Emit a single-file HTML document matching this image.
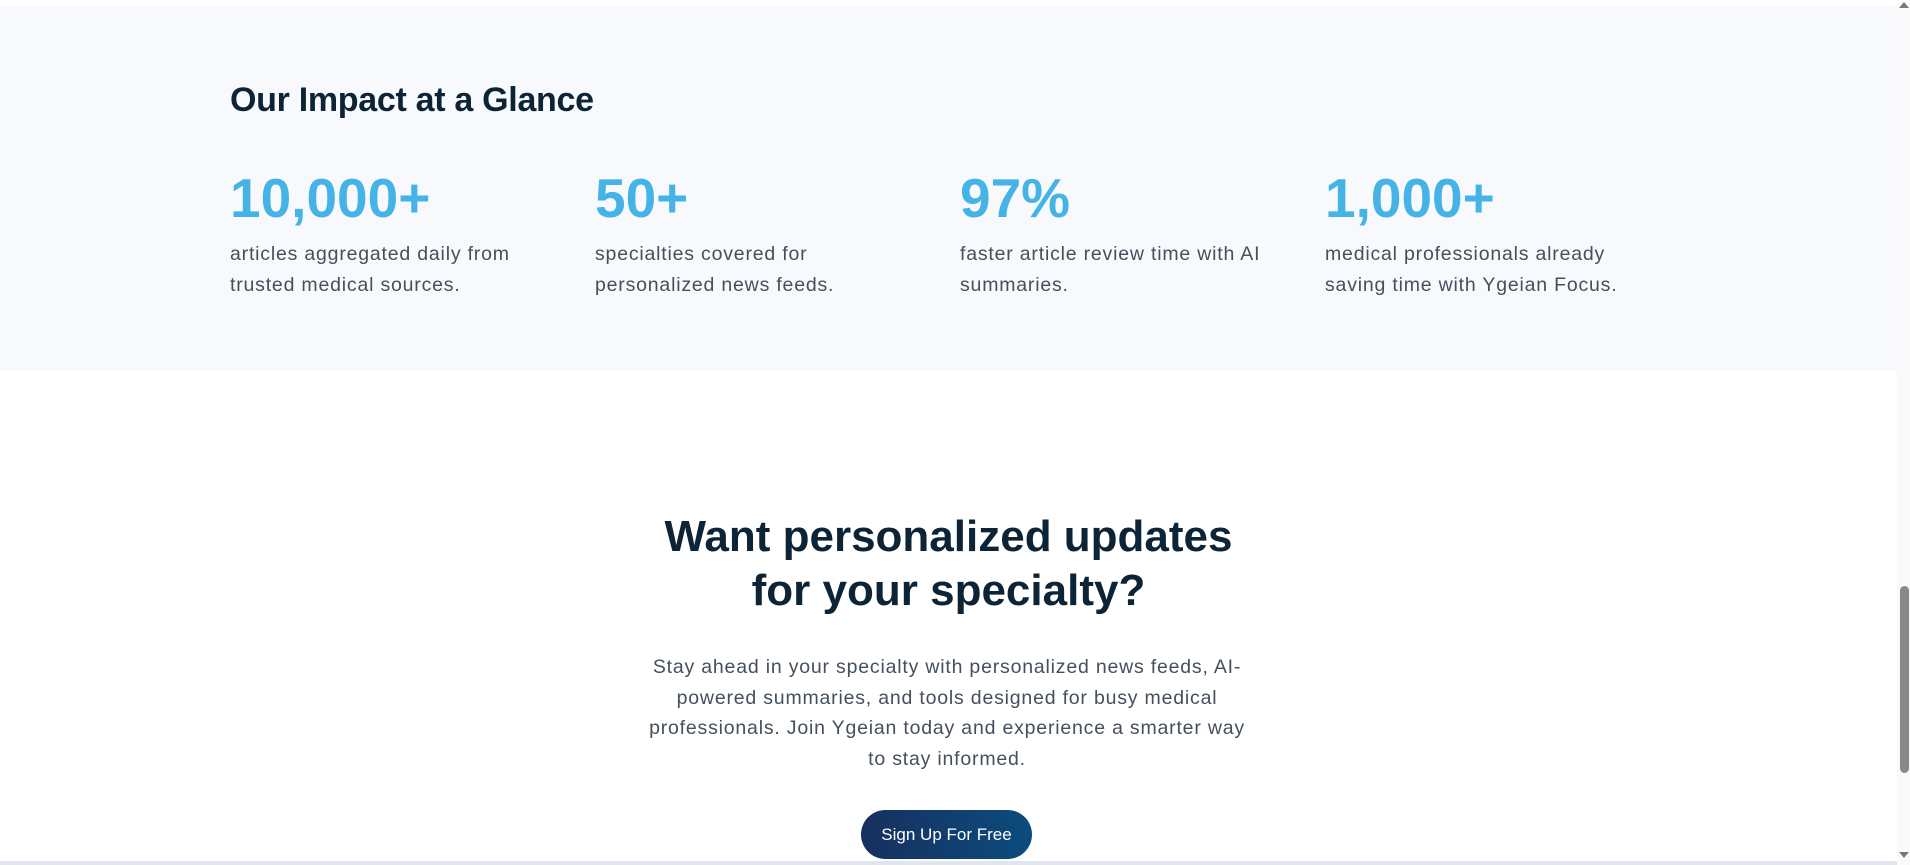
<!DOCTYPE html>
<html><head><meta charset="utf-8"><style>
*{margin:0;padding:0;box-sizing:border-box}
body{width:1910px;height:865px;overflow:hidden;background:#fff;font-family:"Liberation Sans",sans-serif;position:relative}
.gray{position:absolute;left:0;top:6px;width:1897px;height:365px;background:#f7f9fc}
h2{position:absolute;left:230px;top:81px;font-size:34px;font-weight:bold;color:#0c2435;letter-spacing:-0.3px}
.stat{position:absolute;top:166px;width:360px}
.num{font-size:55px;font-weight:bold;color:#45b3e6;line-height:64px;letter-spacing:0px}
.txt{margin-top:9px;font-size:19.5px;line-height:31px;color:#45505c;letter-spacing:0.8px}
.cta{position:absolute;left:0;width:1897px;text-align:center}
.cta h3{position:absolute;top:510px;width:100%;font-size:44px;font-weight:bold;line-height:54px;color:#0c2435;letter-spacing:0px}
.cta p{position:absolute;top:652px;left:560px;width:774px;font-size:19.5px;line-height:30.5px;color:#45505c;letter-spacing:0.8px}
.btn{position:absolute;left:861px;top:810px;width:171px;height:49px;border-radius:25px;background:linear-gradient(90deg,#17305f,#0b4c7d);color:#fff;font-size:17px;line-height:49px;text-align:center}
.sb{position:absolute;left:1897px;top:0;width:13px;height:865px;background:#fafafa}
.thumb{position:absolute;left:1900px;top:586px;width:9px;height:187px;border-radius:5px;background:#898989}
.bot{position:absolute;left:0;top:861px;width:1897px;height:4px;background:#dfe6f2}
</style></head><body>
<div class="gray"></div>
<h2>Our Impact at a Glance</h2>
<div class="stat" style="left:230px"><div class="num">10,000+</div><div class="txt">articles aggregated daily from<br>trusted medical sources.</div></div>
<div class="stat" style="left:595px"><div class="num">50+</div><div class="txt">specialties covered for<br>personalized news feeds.</div></div>
<div class="stat" style="left:960px"><div class="num">97%</div><div class="txt">faster article review time with AI<br>summaries.</div></div>
<div class="stat" style="left:1325px"><div class="num">1,000+</div><div class="txt">medical professionals already<br>saving time with Ygeian Focus.</div></div>
<div class="cta">
<h3>Want personalized updates<br>for your specialty?</h3>
<p>Stay ahead in your specialty with personalized news feeds, AI-<br>powered summaries, and tools designed for busy medical<br>professionals. Join Ygeian today and experience a smarter way<br>to stay informed.</p>
</div>
<div class="btn">Sign Up For Free</div>
<div class="bot"></div>
<div class="sb"></div>
<div class="thumb"></div>
<div style="position:absolute;left:1899px;top:2px;width:0;height:0;border-left:5px solid transparent;border-right:5px solid transparent;border-bottom:6px solid #777"></div>
<div style="position:absolute;left:1899px;top:852px;width:0;height:0;border-left:5px solid transparent;border-right:5px solid transparent;border-top:6px solid #777"></div>
</body></html>
